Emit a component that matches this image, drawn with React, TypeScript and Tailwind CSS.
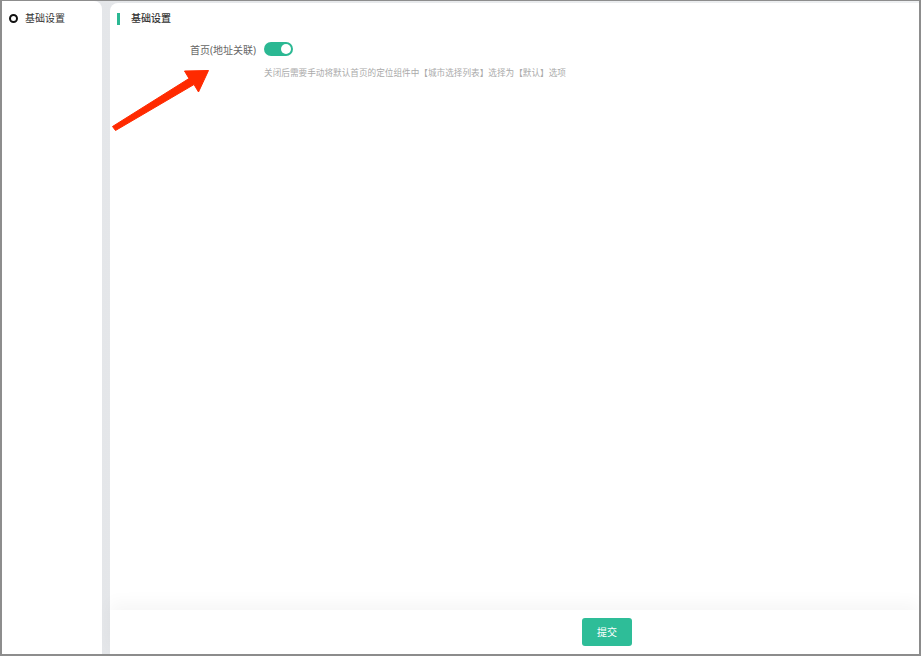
import React from "react";

const font = { fontFamily: '"Noto Sans", "Noto Sans CJK SC", sans-serif' };

function Switch() {
  return (
    <span className="relative inline-flex h-[14px] w-[29px] items-center rounded-full bg-[#2bb893]">
      <span className="absolute right-[2px] h-[10px] w-[10px] rounded-full bg-white" />
    </span>
  );
}

function Arrow() {
  return (
    <svg
      className="pointer-events-none absolute left-0 top-0"
      width="921"
      height="656"
      viewBox="0 0 921 656"
    >
      <polygon
        points="112.5,126.5 189,78.5 184.5,71 208.5,70.5 198.5,92 194,84.5 115.5,130.5"
        fill="#ff2a00"
        strokeLinejoin="round"
        stroke="#ff2a00"
        strokeWidth="1"
      />
    </svg>
  );
}

export default function App() {
  return (
    <div
      className="relative h-[656px] w-[921px] bg-[#8d8d8d] pb-[2px] pl-[2px] pr-[2px] pt-[1px]"
      style={font}
    >
      <div className="flex h-full bg-gradient-to-r from-[#e3e5e8] to-[#eef0f2]">
        <aside className="w-[100px] rounded-tr-[8px] bg-white">
          <div className="flex h-[34px] items-center gap-[7px] pl-[7px] text-[10px] text-[#333]">
            <span className="h-[9px] w-[9px] rounded-full border-2 border-[#111]" />
            基础设置
          </div>
        </aside>
        <div className="ml-[8px] mt-[2px] flex flex-1 flex-col rounded-tl-[8px] bg-white">
          <div className="flex h-[31px] items-center gap-[11px] pl-[7px]">
            <span className="h-[12px] w-[3px] bg-[#2bb893]" />
            <span className="text-[10px] font-medium text-[#333]">基础设置</span>
          </div>
          <div className="flex items-center pt-[4px]">
            <span className="w-[146px] text-right text-[10px] text-[#666]">首页(地址关联)</span>
            <span className="ml-[8px]">
              <Switch />
            </span>
          </div>
          <p className="ml-[154px] mt-[5px] text-[8.65px] text-[#aaa]">
            关闭后需要手动将默认首页的定位组件中【城市选择列表】选择为【默认】选项
          </p>
          <div className="flex-1" />
          <footer className="flex h-[44px] items-center bg-white pl-[472px] shadow-[0_-8px_16px_rgba(0,0,0,0.035)]">
            <button className="h-[28px] w-[50px] rounded-[3px] bg-[#2ebd98] text-[10px] text-white">
              提交
            </button>
          </footer>
        </div>
      </div>
      <Arrow />
    </div>
  );
}
